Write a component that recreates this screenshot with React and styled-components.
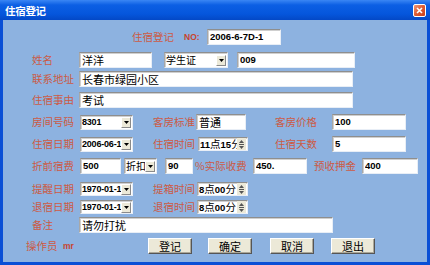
import React from "react";
import styled, { createGlobalStyle } from "styled-components";

const Global = createGlobalStyle`
  html, body { margin: 0; padding: 0; background: #8db2e0; overflow: hidden; }
  * { box-sizing: border-box; }
`;

const CJK = `"Noto Sans CJK SC", "Noto Sans", sans-serif`;

const Window = styled.div`
  width: 430px;
  height: 265px;
  display: flex;
  flex-direction: column;
  font-family: ${CJK};
`;

const TitleBar = styled.div`
  height: 20px;
  flex: none;
  display: flex;
  align-items: center;
  justify-content: space-between;
  padding: 0 4px 0 5px;
  background: linear-gradient(#3a86f4 0%, #0c5fe4 25%, #0556dc 70%, #0348c6 100%);
  color: #fff;
  font-weight: bold;
  font-size: 10.5px;
  letter-spacing: -0.3px;
`;

const CloseBtn = styled.div`
  width: 13px;
  height: 13px;
  border: 1px solid #fff;
  border-radius: 2px;
  background: linear-gradient(135deg, #f09a7a, #de5a32 50%, #c8401c);
  display: flex;
  align-items: center;
  justify-content: center;
`;

const Body = styled.div`
  flex: 1;
  background: #8db2e0;
  border: 3px solid #0a4fd6;
  border-top: none;
  display: flex;
  flex-direction: column;
`;

const Row = styled.div`
  display: flex;
  align-items: center;
  height: 16px;
  margin-top: ${(p) => p.$mt}px;
  padding-left: ${(p) => p.$pl}px;
`;

const Label = styled.div`
  flex: none;
  width: ${(p) => p.$w}px;
  margin-left: ${(p) => p.$ml || 0}px;
  color: #cc5a44;
  font-size: 10.5px;
  line-height: 14px;
  white-space: nowrap;
`;

const Strong = styled.div`
  flex: none;
  width: ${(p) => p.$w}px;
  margin-left: ${(p) => p.$ml || 0}px;
  color: #c8442e;
  font-family: "Liberation Sans", Arial, sans-serif;
  font-weight: bold;
  font-size: 8.5px;
  line-height: 14px;
  white-space: nowrap;
`;

const Field = styled.div`
  flex: none;
  width: ${(p) => p.$w}px;
  height: ${(p) => p.$h || 16}px;
  margin-left: ${(p) => p.$ml || 0}px;
  background: #fff;
  border-top: 1px solid #8e8e8e;
  border-left: 1px solid #a8a8a8;
  border-right: 1px solid #e8eef6;
  border-bottom: 1px solid #e8eef6;
  box-shadow: inset 1px 1px 0 #cfcfcf;
  display: flex;
  align-items: center;
  overflow: hidden;
  padding-left: ${(p) => (p.$tight ? 1 : 2)}px;
  color: #000;
  white-space: nowrap;
`;

const Txt = styled.span`
  font-family: ${(p) => (p.$num ? `"Liberation Sans", Arial, sans-serif` : CJK)};
  font-weight: ${(p) => (p.$num ? "bold" : "normal")};
  font-size: ${(p) => (p.$num ? (p.$small ? "9px" : "9.5px") : p.$small ? "10px" : "11px")};
  letter-spacing: ${(p) => (p.$small && p.$num ? "-0.2px" : "0")};
  line-height: 14px;
  flex: 1;
  overflow: hidden;
  white-space: nowrap;
`;

const DropBtn = styled.div`
  flex: none;
  width: 10px;
  height: 11px;
  margin-right: 1px;
  background: #ece9d8;
  border-top: 1px solid #fff;
  border-left: 1px solid #fff;
  border-right: 1px solid #8a8a8a;
  border-bottom: 1px solid #8a8a8a;
  display: flex;
  align-items: center;
  justify-content: center;
`;

const SpinBtn = styled.div`
  flex: none;
  width: 9px;
  height: 12px;
  margin-right: 1px;
  background: #ece9d8;
  display: flex;
  flex-direction: column;
  align-items: center;
  justify-content: space-around;
  padding: 1px 0;
`;

const Button = styled.button`
  flex: none;
  width: 44px;
  height: 16px;
  margin-left: ${(p) => p.$ml || 0}px;
  padding: 0;
  background: #ece9d8;
  border-top: 1px solid #fff;
  border-left: 1px solid #fff;
  border-right: 1px solid #555;
  border-bottom: 1px solid #555;
  box-shadow: inset -1px -1px 0 #aca899;
  font-family: ${CJK};
  font-size: 11px;
  line-height: 14px;
  color: #000;
`;

const Arrow = () => (
  <svg width="5" height="3" viewBox="0 0 5 3">
    <path d="M0 0h5L2.5 3z" fill="#000" />
  </svg>
);

const Combo = ({ w, ml, h = 15, children }) => (
  <Field $w={w} $ml={ml} $h={h} $tight>
    <Txt $num={/^[0-9]/.test(children)} $small>
      {children}
    </Txt>
    <DropBtn>
      <Arrow />
    </DropBtn>
  </Field>
);

const Spinner = ({ w, ml, h = 14, children }) => (
  <Field $w={w} $ml={ml} $h={h} $tight>
    <Txt $num>{children}</Txt>
    <SpinBtn>
      <svg width="5" height="3" viewBox="0 0 5 3">
        <path d="M0 3h5L2.5 0z" fill="#555" />
      </svg>
      <svg width="5" height="1" viewBox="0 0 5 1">
        <rect width="5" height="1" fill="#555" />
      </svg>
      <svg width="5" height="3" viewBox="0 0 5 3">
        <path d="M0 0h5L2.5 3z" fill="#555" />
      </svg>
    </SpinBtn>
  </Field>
);

const Text = ({ w, ml, h, num, children }) => (
  <Field $w={w} $ml={ml} $h={h}>
    <Txt $num={num}>{children}</Txt>
  </Field>
);

const Mixed = styled.span`
  font-family: ${CJK};
  font-weight: normal;
  font-size: 10.5px;
`;

export default function App() {
  return (
    <Window>
      <Global />
      <TitleBar>
        <span>住宿登记</span>
        <CloseBtn>
          <svg width="7" height="7" viewBox="0 0 7 7">
            <path d="M1 1l5 5M6 1l-5 5" stroke="#fff" strokeWidth="1.6" />
          </svg>
        </CloseBtn>
      </TitleBar>
      <Body>
        <Row $mt={9} $pl={129}>
          <Label $w={52}>住宿登记</Label>
          <Strong $w={23}>NO:</Strong>
          <Text w={74} num>2006-6-7D-1</Text>
        </Row>
        <Row $mt={7} $pl={29}>
          <Label $w={47}>姓名</Label>
          <Text w={73}>洋洋</Text>
          <Combo w={64} ml={12} h={16}>学生证</Combo>
          <Text w={118} ml={9} num>009</Text>
        </Row>
        <Row $mt={3} $pl={29}>
          <Label $w={47}>联系地址</Label>
          <Text w={274}>长春市绿园小区</Text>
        </Row>
        <Row $mt={5} $pl={29}>
          <Label $w={47}>住宿事由</Label>
          <Text w={274}>考试</Text>
        </Row>
        <Row $mt={6} $pl={29}>
          <Label $w={48}>房间号码</Label>
          <Combo w={53}>8301</Combo>
          <Label $w={43} $ml={20}>客房标准</Label>
          <Text w={50}>普通</Text>
          <Label $w={57} $ml={29}>客房价格</Label>
          <Text w={74} num>100</Text>
        </Row>
        <Row $mt={6} $pl={29}>
          <Label $w={48}>住宿日期</Label>
          <Combo w={53}>2006-06-15</Combo>
          <Label $w={45} $ml={20}>住宿时间</Label>
          <Spinner w={50}>
            11<Mixed>点</Mixed>15<Mixed>分</Mixed>
          </Spinner>
          <Label $w={57} $ml={27}>住宿天数</Label>
          <Text w={74} num>5</Text>
        </Row>
        <Row $mt={6} $pl={29}>
          <Label $w={48}>折前宿费</Label>
          <Text w={41} num>500</Text>
          <Combo w={33} ml={3} h={16}>折扣</Combo>
          <Text w={28} ml={8} num>90</Text>
          <Label $w={58} $ml={2}>%实际收费</Label>
          <Text w={54} num>450.</Text>
          <Label $w={48} $ml={7}>预收押金</Label>
          <Text w={56} num>400</Text>
        </Row>
        <Row $mt={7} $pl={29}>
          <Label $w={48}>提醒日期</Label>
          <Combo w={53} h={14}>1970-01-15</Combo>
          <Label $w={44} $ml={20}>提箱时间</Label>
          <Spinner w={51}>
            8<Mixed>点</Mixed>00<Mixed>分</Mixed>
          </Spinner>
        </Row>
        <Row $mt={2} $pl={29}>
          <Label $w={48}>退宿日期</Label>
          <Combo w={53} h={14}>1970-01-15</Combo>
          <Label $w={44} $ml={20}>退宿时间</Label>
          <Spinner w={51}>
            8<Mixed>点</Mixed>00<Mixed>分</Mixed>
          </Spinner>
        </Row>
        <Row $mt={2} $pl={29}>
          <Label $w={47}>备注</Label>
          <Text w={254}>请勿打扰</Text>
        </Row>
        <Row $mt={5} $pl={23}>
          <Label $w={37}>操作员</Label>
          <Strong $w={85}>mr</Strong>
          <Button>登记</Button>
          <Button $ml={16}>确定</Button>
          <Button $ml={18}>取消</Button>
          <Button $ml={17}>退出</Button>
        </Row>
      </Body>
    </Window>
  );
}
